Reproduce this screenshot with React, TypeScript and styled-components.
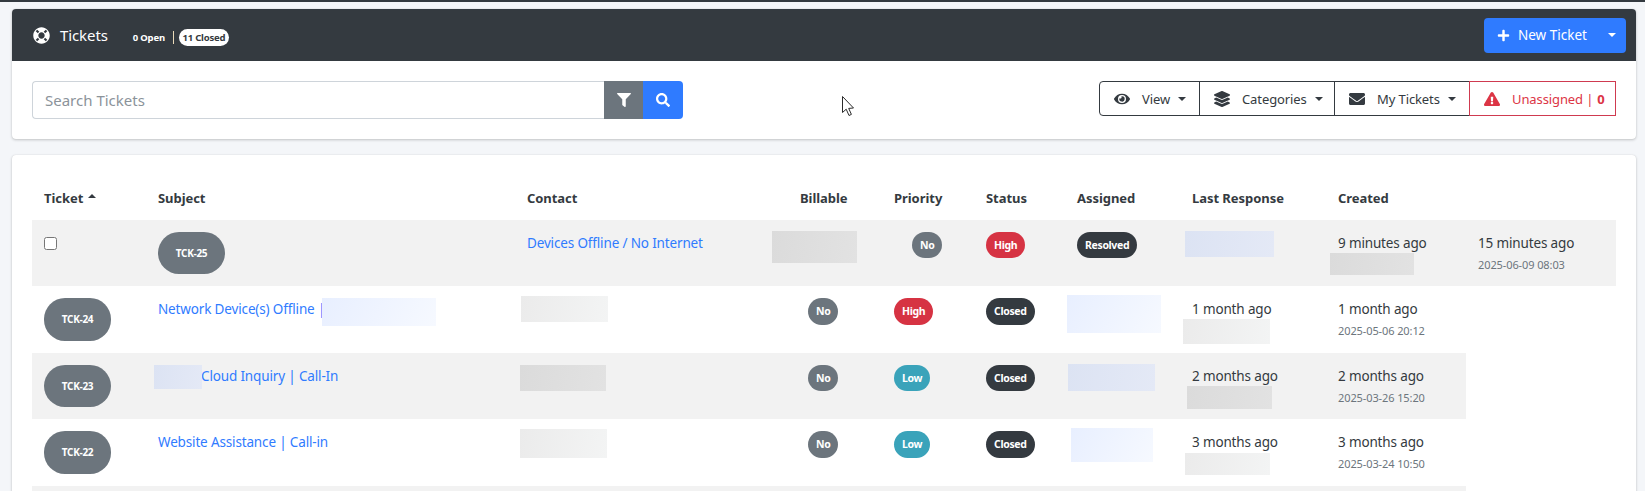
import React from "react";
import styled, { createGlobalStyle } from "styled-components";
import { FaLifeRing, FaPlus, FaFilter, FaSearch, FaEye, FaLayerGroup, FaEnvelope, FaExclamationTriangle } from "react-icons/fa";

const Global = createGlobalStyle`
  html, body { margin: 0; padding: 0; background: #f4f6f9; overflow: hidden; }
  body { font-family: "Noto Sans", "Open Sans", sans-serif; font-size: 14px; color: #343a40; }
  * { box-sizing: border-box; }
`;

const Page = styled.div`
  position: relative;
  height: 491px;
  overflow: hidden;
  border-top: 2px solid #343a40;
  padding: 7px 9px 0 12px;
`;
const Card = styled.section`
  background: #fff;
  border-radius: 4px;
  box-shadow: 0 0 1px rgba(0,0,0,.125), 0 1px 3px rgba(0,0,0,.2);
`;
const TableCard = styled(Card)`
  margin-top: 16px;
  padding: 21px 20px 0;
  height: 400px;
`;
const Header = styled.header`
  height: 52px;
  background: #343a40;
  border-radius: 4px 4px 0 0;
  color: #fff;
  display: flex;
  align-items: center;
  padding: 0 10px 0 21px;
`;
const Title = styled.h1`
  margin: 0;
  font-size: 15px;
  font-weight: 400;
  letter-spacing: -0.1px;
  display: flex;
  align-items: center;
  gap: 10px;
  svg { width: 17px; height: 17px; }
`;
const Counts = styled.div`
  margin: 5px 0 0 25px;
  display: flex;
  align-items: center;
  font-size: 9.5px;
  font-weight: 700;
  letter-spacing: -0.2px;
`;
const Divider = styled.span`
  width: 1px;
  height: 13px;
  background: #e9d9b8;
  margin: 0 5px 0 8px;
`;
const LightPill = styled.span`
  background: #fff;
  color: #343a40;
  border-radius: 9px;
  height: 17px;
  width: 50px;
  display: flex;
  align-items: center;
  justify-content: center;
`;
const NewTicket = styled.button`
  margin-left: auto;
  width: 142px;
  height: 35px;
  background: #2f7bff;
  border: 0;
  border-radius: 4px;
  color: #fff;
  font: inherit;
  font-size: 13.5px;
  display: flex;
  align-items: center;
  padding: 0 10px 0 13px;
  svg { width: 13px; height: 13px; margin-right: 8px; }
`;
const Caret = styled.i<{ $ml?: number }>`
  display: inline-block;
  margin-left: ${(p) => p.$ml ?? 8}px;
  border-top: 4.5px solid currentColor;
  border-left: 4.5px solid transparent;
  border-right: 4.5px solid transparent;
`;
const PushCaret = styled(Caret)`
  margin-left: auto;
`;
const Toolbar = styled.div`
  height: 78px;
  padding: 20px 20px 0;
  display: flex;
  justify-content: space-between;
  align-items: flex-start;
`;
const SearchGroup = styled.div`
  width: 651px;
  height: 38px;
  display: flex;
`;
const SearchInput = styled.input`
  flex: 1;
  min-width: 0;
  border: 1px solid #ced4da;
  border-right: 0;
  border-radius: 4px 0 0 4px;
  padding: 0 12px;
  font: inherit;
  font-size: 15px;
  outline: none;
  &::placeholder { color: #8b939a; opacity: 1; }
`;
const SearchButton = styled.button<{ $bg: string; $w: number; $end?: boolean }>`
  width: ${(p) => p.$w}px;
  border: 0;
  padding: 0;
  color: #fff;
  background: ${(p) => p.$bg};
  border-radius: ${(p) => (p.$end ? "0 4px 4px 0" : "0")};
  display: flex;
  align-items: center;
  justify-content: center;
  svg { width: 14px; height: 14px; }
`;
const FilterGroup = styled.div`
  display: flex;
  height: 35px;
`;
const Segment = styled.button<{ $w: number; $danger?: boolean }>`
  width: ${(p) => p.$w}px;
  height: 35px;
  background: #fff;
  margin-left: -1px;
  border: 1px solid ${(p) => (p.$danger ? "#cf3a50" : "#343a40")};
  color: ${(p) => (p.$danger ? "#dc3545" : "#343a40")};
  font: inherit;
  font-size: 13px;
  letter-spacing: -0.1px;
  display: flex;
  align-items: center;
  padding: 0 0 0 14px;
  white-space: nowrap;
  &:first-child { border-radius: 4px 0 0 4px; margin-left: 0; }
  svg { width: 16px; height: 16px; margin-right: 12px; flex: none; }
  b { font-weight: 700; margin-left: 4px; }
`;
const TicketsTable = styled.table`
  width: 1584px;
  table-layout: fixed;
  border-collapse: collapse;
`;
const Th = styled.th`
  height: 44px;
  padding: 0 12px;
  text-align: left;
  font-size: 13px;
  font-weight: 700;
  color: #343a40;
  letter-spacing: -0.05px;
  white-space: nowrap;
`;
const SortUp = styled.i`
  display: inline-block;
  vertical-align: 5px;
  margin-left: 5px;
  border-bottom: 4.5px solid #343a40;
  border-left: 4.5px solid transparent;
  border-right: 4.5px solid transparent;
`;
const Row = styled.tr<{ $h: number; $odd: boolean }>`
  height: ${(p) => p.$h}px;
  --ticket-h: ${(p) => p.$h - 24}px;
  --pill-h: ${(p) => p.$h - 40}px;
  background: ${(p) => (p.$odd ? "#f2f2f2" : "#fff")};
`;
const Td = styled.td<{ $indent?: number }>`
  position: relative;
  vertical-align: top;
  padding: 12px 12px 0 ${(p) => 12 + (p.$indent ?? 0)}px;
  font-size: 13.5px;
  line-height: 23px;
  letter-spacing: -0.15px;
  white-space: nowrap;
  color: #343a40;
`;
const Check = styled.input`
  display: block;
  margin: 5px 0 0;
  width: 13px;
  height: 13px;
`;
const TicketPill = styled.span`
  display: flex;
  align-items: center;
  justify-content: center;
  width: 67px;
  height: var(--ticket-h);
  border-radius: 21px;
  background: #6c757d;
  color: #fff;
  font-size: 10px;
  font-weight: 700;
  letter-spacing: -0.3px;
`;
const Pill = styled.span<{ $bg: string }>`
  display: inline-flex;
  align-items: center;
  padding: 0 8px;
  height: var(--pill-h);
  border-radius: 14px;
  background: ${(p) => p.$bg};
  color: #fff;
  font-size: 10.5px;
  font-weight: 700;
  letter-spacing: -0.35px;
  vertical-align: top;
`;
const Link = styled.a<{ $indent?: number }>`
  color: #2f7bff;
  text-decoration: none;
  padding-left: ${(p) => p.$indent ?? 0}px;
`;
const DateText = styled.div`
  font-size: 11px;
  line-height: 19px;
  letter-spacing: -0.1px;
  color: #6c757d;
`;
const tones: Record<string, string> = {
  gray: "linear-gradient(100deg,#dbdbdb,#e2e2e2)",
  blue: "linear-gradient(100deg,#dce3f3,#e4e9f6)",
  soft: "linear-gradient(100deg,#ebebeb,#f3f4f4)",
  sky: "linear-gradient(120deg,#e8efff,#f6f9ff)",
};
const Redact = styled.span<{ $x: number; $y: number; $w: number; $h: number; $tone: string }>`
  position: absolute;
  left: ${(p) => p.$x}px;
  top: ${(p) => p.$y}px;
  width: ${(p) => p.$w}px;
  height: ${(p) => p.$h}px;
  background: ${(p) => tones[p.$tone]};
`;
const Cursor = styled.svg`
  position: absolute;
  left: 841px;
  top: 93px;
`;

const heads = ["Ticket", "Subject", "Contact", "Billable", "Priority", "Status", "Assigned", "Last Response", "Created"];
const widths = [114, 369, 273, 94, 92, 91, 115, 146, 140, 150];
const priorityColor: Record<string, string> = { High: "#d63343", Low: "#3aa3ba" };

type Data = {
  id: string; h: number; subject: string; indent?: number; subjectRedact?: number[];
  contact: number[]; priority: string; assigned: number[]; last: string; lastRedact: number[];
  created: string; date: string; tones: string[];
};
const rows: Data[] = [
  {
    id: "TCK-24", h: 67, subject: "Network Device(s) Offline |", subjectRedact: [176, 12, 114, 28],
    contact: [6, 10, 87, 26], priority: "High", assigned: [2, 9, 94, 38], last: "1 month ago", lastRedact: [3, 33, 87, 25],
    created: "1 month ago", date: "2025-05-06 20:12", tones: ["sky", "soft", "sky", "soft"],
  },
  {
    id: "TCK-23", h: 66, subject: "Cloud Inquiry | Call-In", indent: 43, subjectRedact: [8, 12, 48, 24],
    contact: [5, 12, 86, 26], priority: "Low", assigned: [3, 11, 87, 27], last: "2 months ago", lastRedact: [7, 33, 85, 23],
    created: "2 months ago", date: "2025-03-26 15:20", tones: ["blue", "gray", "blue", "gray"],
  },
  {
    id: "TCK-22", h: 67, subject: "Website Assistance | Call-in",
    contact: [5, 10, 87, 29], priority: "Low", assigned: [6, 9, 82, 34], last: "3 months ago", lastRedact: [5, 34, 85, 22],
    created: "3 months ago", date: "2025-03-24 10:50", tones: ["sky", "soft", "sky", "soft"],
  },
];

function Blur({ box, tone }: { box: number[]; tone: string }) {
  return <Redact $x={box[0]} $y={box[1]} $w={box[2]} $h={box[3]} $tone={tone} />;
}

export default function App() {
  return (
    <Page>
      <Global />
      <Card>
        <Header>
          <Title><FaLifeRing />Tickets</Title>
          <Counts>
            <span>0 Open</span>
            <Divider />
            <LightPill>11 Closed</LightPill>
          </Counts>
          <NewTicket><FaPlus />New Ticket<PushCaret /></NewTicket>
        </Header>
        <Toolbar>
          <SearchGroup>
            <SearchInput placeholder="Search Tickets" />
            <SearchButton $bg="#6c757d" $w={39}><FaFilter /></SearchButton>
            <SearchButton $bg="#2f7bff" $w={40} $end><FaSearch /></SearchButton>
          </SearchGroup>
          <FilterGroup>
            <Segment $w={101}><FaEye />View<Caret /></Segment>
            <Segment $w={136}><FaLayerGroup />Categories<Caret /></Segment>
            <Segment $w={136}><FaEnvelope />My Tickets<Caret /></Segment>
            <Segment $w={147} $danger><FaExclamationTriangle />Unassigned | <b>0</b></Segment>
          </FilterGroup>
        </Toolbar>
      </Card>
      <TableCard>
        <TicketsTable>
          <colgroup>{widths.map((w, i) => <col key={i} style={{ width: w }} />)}</colgroup>
          <thead>
            <tr>
              {heads.map((h, i) => (
                <Th key={h}>{h}{i === 0 && <SortUp />}</Th>
              ))}
              <Th />
            </tr>
          </thead>
          <tbody>
            <Row $h={66} $odd>
              <Td><Check type="checkbox" /></Td>
              <Td><TicketPill>TCK-25</TicketPill></Td>
              <Td><Link href="#">Devices Offline / No Internet</Link></Td>
              <Td><Blur box={[-16, 11, 85, 32]} tone="gray" /></Td>
              <Td $indent={18}><Pill $bg="#6c757d">No</Pill></Td>
              <Td><Pill $bg="#d63343">High</Pill></Td>
              <Td><Pill $bg="#343a40">Resolved</Pill></Td>
              <Td><Blur box={[5, 11, 89, 26]} tone="blue" /></Td>
              <Td>9 minutes ago<Blur box={[4, 33, 84, 22]} tone="gray" /></Td>
              <Td>15 minutes ago<DateText>2025-06-09 08:03</DateText></Td>
            </Row>
            {rows.map((r, i) => (
              <Row key={r.id} $h={r.h} $odd={i % 2 === 1}>
                <Td><TicketPill>{r.id}</TicketPill></Td>
                <Td>
                  <Link href="#" $indent={r.indent}>{r.subject}</Link>
                  {r.subjectRedact && <Blur box={r.subjectRedact} tone={r.tones[0]} />}
                </Td>
                <Td><Blur box={r.contact} tone={r.tones[1]} /></Td>
                <Td $indent={8}><Pill $bg="#6c757d">No</Pill></Td>
                <Td><Pill $bg={priorityColor[r.priority]}>{r.priority}</Pill></Td>
                <Td><Pill $bg="#343a40">Closed</Pill></Td>
                <Td><Blur box={r.assigned} tone={r.tones[2]} /></Td>
                <Td>{r.last}<Blur box={r.lastRedact} tone={r.tones[3]} /></Td>
                <Td>{r.created}<DateText>{r.date}</DateText></Td>
              </Row>
            ))}
            <Row $h={66} $odd>
              <Td /><Td /><Td /><Td /><Td /><Td /><Td /><Td /><Td />
            </Row>
          </tbody>
        </TicketsTable>
      </TableCard>
      <Cursor width="14" height="22" viewBox="0 0 14 22">
        <path d="M1.5 1.5 V17.5 L5.2 14.2 L8 20.5 L10.4 19.4 L7.7 13.4 L12.5 13 Z" fill="#fff" stroke="#2b2b2b" strokeWidth="1" />
      </Cursor>
    </Page>
  );
}
